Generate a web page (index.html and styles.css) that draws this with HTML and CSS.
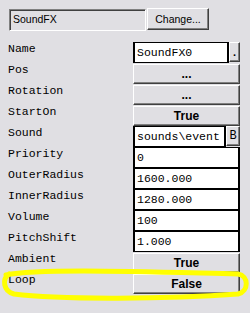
FILE: index.html
```html
<!DOCTYPE html>
<html lang="en">
<head>
    <meta charset="UTF-8">
    <title>SoundFX properties</title>
    <link rel="stylesheet" href="styles.css">
</head>
<body>
    <div class="top">
        <div class="name-box">SoundFX</div>
        <button class="btn change">Change...</button>
    </div>

    <div class="props">
        <div class="label">Name</div>
        <div class="value"><span class="field">SoundFX0</span><button class="btn mini">.</button></div>

        <div class="label">Pos</div>
        <div class="value"><button class="btn big">...</button></div>

        <div class="label">Rotation</div>
        <div class="value"><button class="btn big">...</button></div>

        <div class="label">StartOn</div>
        <div class="value"><button class="btn big">True</button></div>

        <div class="label">Sound</div>
        <div class="value"><span class="field">sounds\event</span><button class="btn mini b">B</button></div>

        <div class="label">Priority</div>
        <div class="value"><span class="field">0</span></div>

        <div class="label">OuterRadius</div>
        <div class="value"><span class="field">1600.000</span></div>

        <div class="label">InnerRadius</div>
        <div class="value"><span class="field">1280.000</span></div>

        <div class="label">Volume</div>
        <div class="value"><span class="field">100</span></div>

        <div class="label">PitchShift</div>
        <div class="value"><span class="field">1.000</span></div>

        <div class="label">Ambient</div>
        <div class="value"><button class="btn big">True</button></div>

        <div class="label">Loop</div>
        <div class="value"><button class="btn big">False</button></div>
    </div>

    <!-- marker scribble around the Loop row -->
    <svg class="scribble" width="250" height="313" viewBox="0 0 250 313">
        <path d="M6 275 C 40 268, 150 272, 238 274 C 249 276, 249 291, 238 294 C 170 299, 60 300, 14 294 C 3 291, 2 279, 9 274" fill="none" stroke="#ffff00" stroke-width="5" stroke-linecap="round"/>
    </svg>
</body>
</html>
```

FILE: styles.css
```css
body {
    margin: 0;
    width: 250px;
    height: 313px;
    background-color: #e0dfe3;
    position: relative;
    overflow: hidden;
}
.top {
    display: flex;
    align-items: flex-start;
    padding: 8px 0 0 9px;
    gap: 1px;
}
.name-box {
    box-sizing: border-box;
    width: 137px;
    height: 22px;
    margin-top: 1px;
    padding: 3px 3px;
    font: 10.5px "Liberation Sans", Arial, sans-serif;
    color: #000;
    border-top: 1px solid #808080;
    border-left: 1px solid #808080;
    border-right: 1px solid #fff;
    border-bottom: 1px solid #fff;
    box-shadow: inset 1px 1px 0 #404040;
}
.btn {
    box-sizing: border-box;
    margin: 0;
    padding: 0;
    background-color: #e0dfe3;
    color: #000;
    border-top: 1px solid #fff;
    border-left: 1px solid #fff;
    border-right: 1px solid #404040;
    border-bottom: 1px solid #404040;
    box-shadow: inset -1px -1px 0 #808080;
}
.change {
    width: 62px;
    height: 22px;
    font: 10.5px "Liberation Sans", Arial, sans-serif;
}
.props {
    display: grid;
    grid-template-columns: 125px 107px;
    grid-auto-rows: 21px;
    margin-top: 11px;
    padding-left: 8px;
}
.label {
    font: 11.5px/14px "Liberation Mono", "Courier New", monospace;
    color: #000;
}
.value {
    display: flex;
    height: 21px;
}
.field {
    box-sizing: border-box;
    flex: 1;
    min-width: 0;
    height: 21px;
    padding: 2px 0 0 2px;
    background: #fff;
    border: 1px solid #000;
    border-left-width: 2px;
    border-right-width: 2px;
    font: 11.5px/15px "Liberation Mono", "Courier New", monospace;
    white-space: nowrap;
    overflow: hidden;
}
.big {
    width: 107px;
    height: 20px;
    margin-top: 1px;
    font: bold 12px "Liberation Sans", Arial, sans-serif;
}
.mini {
    width: 11px;
    height: 20px;
    font: bold 11px "Liberation Sans", Arial, sans-serif;
}
.mini.b {
    width: 14px;
    font: 12px "Liberation Mono", "Courier New", monospace;
}
.scribble {
    position: absolute;
    left: 0;
    top: 0;
}
```
